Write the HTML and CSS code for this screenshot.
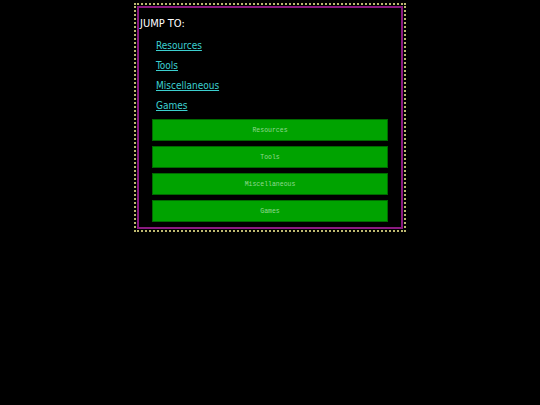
FILE: index.html
```
<!DOCTYPE html>
<html>
<head>
<meta charset="utf-8">
<link rel="stylesheet" href="styles.css">
</head>
<body>
<div class="outer">
  <div class="inner">
    <div class="jump">JUMP TO:</div>
    <ul class="links">
      <li><a href="#resources">Resources</a></li>
      <li><a href="#tools">Tools</a></li>
      <li><a href="#misc">Miscellaneous</a></li>
      <li><a href="#games">Games</a></li>
    </ul>
    <div class="buttons">
      <button class="btn">Resources</button>
      <button class="btn">Tools</button>
      <button class="btn">Miscellaneous</button>
      <button class="btn">Games</button>
    </div>
  </div>
</div>
</body>
</html>
```
FILE: styles.css
```
html, body {
  margin: 0;
  padding: 0;
  background: #000;
}
body {
  font-family: "DejaVu Sans", sans-serif;
  font-stretch: condensed;
  color: #fff;
}
.outer {
  width: 268px;
  margin: 3px auto 0;
  border: 2px dotted #bdb870;
}
.inner {
  margin: 1px;
  border: 2px solid #8a1a80;
  padding: 8px 0 5px;
}
.jump {
  font-size: 11px;
  line-height: 16px;
  padding-left: 1px;
}
.links {
  list-style: none;
  margin: 4px 0 0;
  padding: 0 0 0 17px;
}
.links li {
  font-size: 10px;
  line-height: 20px;
}
.links a {
  color: #3cd0d0;
}
.buttons {
  display: flex;
  flex-direction: column;
  align-items: center;
  gap: 5px;
  margin-top: 3px;
}
.btn {
  width: 90%;
  height: 22px;
  background: #00a300;
  border: 1px solid #006a00;
  color: #90d890;
  font-family: "Liberation Mono", monospace;
  font-size: 6.5px;
  padding: 0;
}
```
